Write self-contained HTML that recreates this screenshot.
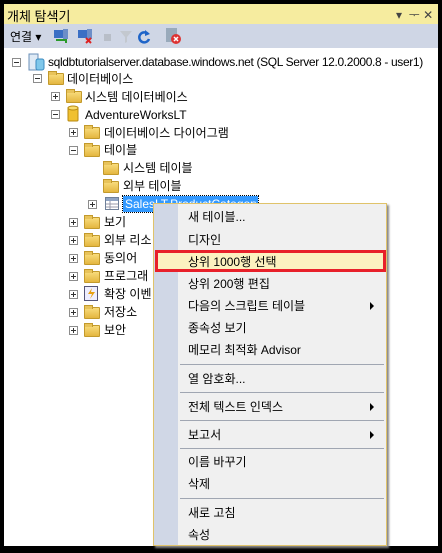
<!DOCTYPE html>
<html><head><meta charset="utf-8"><style>
*{margin:0;padding:0;box-sizing:border-box}
body{width:442px;height:553px;background:#000;position:relative;overflow:hidden;font-family:"Segoe UI","Liberation Sans","Noto Sans CJK KR",sans-serif;font-size:12px;color:#000}
.a{position:absolute;white-space:nowrap}
#title{left:4px;top:4px;width:434px;height:20px;background:#f6ec9f}
#tb{left:4px;top:24px;width:434px;height:24px;background:#cfd6e5}
#tree{left:4px;top:48px;width:434px;height:498px;background:#fff;overflow:hidden}
.ex{position:absolute;width:9px;height:9px;border:1px solid #8c8c8c;background:#fff}
.ex:before{content:"";position:absolute;left:1px;top:3px;width:5px;height:1px;background:#333}
.ex.p:after{content:"";position:absolute;left:3px;top:1px;width:1px;height:5px;background:#333}
.fd{position:absolute;width:16px;height:12px;background:linear-gradient(#f8dc7c,#e4b640);border:1px solid #c39a2c;border-radius:1px}
.fd:before{content:"";position:absolute;left:-1px;top:-3px;width:7px;height:3px;background:#e8c35a;border:1px solid #c39a2c;border-bottom:none}
.t{position:absolute;line-height:16px}
#menu{left:153px;top:203px;width:234px;height:343px;background:#f0f0f0;border:1px solid #e0c36a;box-shadow:2px 2px 2px #888}
#strip{position:absolute;left:0;top:0;width:24px;height:100%;background:#d0d7e6}
.mi{position:absolute;left:34px;line-height:16px}
.sep{position:absolute;left:26px;right:2px;height:1px;background:#a0a6b2}
.arr{position:absolute;left:216px;width:0;height:0;border-left:4px solid #000;border-top:4px solid transparent;border-bottom:4px solid transparent}
</style></head><body>
<div class="a" id="title"><span class="a" style="left:3px;top:2px;font-size:13px">개체 탐색기</span><span class="a" style="left:392px;top:2px;font-size:12px;color:#444">▾ &nbsp;ᅮ ✕</span></div>
<div class="a" id="tb">
<span class="a" style="left:6px;top:4px">연결 ▾</span>
<svg class="a" style="left:50px;top:4px" width="100" height="18">
<rect x="0" y="2" width="10" height="8" fill="#3a6fc4"/><rect x="9" y="1" width="5" height="10" fill="#6c8ec8"/><path d="M2 12h10v3" stroke="#2a9a2a" stroke-width="2" fill="none"/>
<rect x="24" y="2" width="10" height="8" fill="#3a6fc4"/><rect x="33" y="1" width="5" height="10" fill="#6c8ec8"/><path d="M32 10l5 5M37 10l-5 5" stroke="#d22" stroke-width="2"/>
<rect x="50" y="6" width="7" height="7" fill="#b8bec8"/>
<path d="M66 3h12l-5 6v5l-2 1v-6z" fill="#c3c8cf"/>
<path d="M94 6a5 5 0 1 0 1 5" stroke="#1e64c8" stroke-width="2.5" fill="none"/><path d="M91 2l5 4-5 2z" fill="#1e64c8"/>
</svg>
<svg class="a" style="left:160px;top:3px" width="18" height="18"><rect x="2" y="1" width="11" height="14" fill="#9ab" /><circle cx="12" cy="12" r="5" fill="#d33"/><path d="M10 10l4 4M14 10l-4 4" stroke="#fff" stroke-width="1.5"/></svg>
</div>
<div class="a" id="tree">
<div class="ex" style="left:8px;top:10px"></div>
<svg class="a" style="left:24px;top:5px" width="18" height="18"><rect x="1" y="1" width="9" height="16" fill="#dfeaf5" stroke="#6a8fb8"/><rect x="8" y="6" width="8" height="11" rx="2" fill="#7fc7ea" stroke="#3b8bc0"/></svg>
<span class="t" style="left:44px;top:6px;letter-spacing:-0.35px">sqldbtutorialserver.database.windows.net (SQL Server 12.0.2000.8 - user1)</span>
<div class="ex" style="left:29px;top:26px"></div><div class="fd" style="left:44px;top:25px"></div><span class="t" style="left:63px;top:23px">데이터베이스</span>
<div class="ex p" style="left:47px;top:44px"></div><div class="fd" style="left:62px;top:43px"></div><span class="t" style="left:81px;top:41px">시스템 데이터베이스</span>
<div class="ex" style="left:47px;top:62px"></div>
<svg class="a" style="left:63px;top:57px" width="12" height="17"><rect x="1" y="2" width="10" height="14" rx="1" fill="#f0c030" stroke="#b88a10"/><ellipse cx="6" cy="3" rx="5" ry="2" fill="#f8dc70" stroke="#b88a10"/></svg>
<span class="t" style="left:81px;top:59px">AdventureWorksLT</span>
<div class="ex p" style="left:65px;top:80px"></div><div class="fd" style="left:80px;top:79px"></div><span class="t" style="left:100px;top:77px">데이터베이스 다이어그램</span>
<div class="ex" style="left:65px;top:98px"></div><div class="fd" style="left:80px;top:97px"></div><span class="t" style="left:100px;top:94px">테이블</span>
<div class="fd" style="left:99px;top:115px"></div><span class="t" style="left:119px;top:112px">시스템 테이블</span>
<div class="fd" style="left:99px;top:133px"></div><span class="t" style="left:119px;top:130px">외부 테이블</span>
<div class="ex p" style="left:84px;top:152px"></div>
<svg class="a" style="left:101px;top:149px" width="14" height="13"><rect x="0.5" y="0.5" width="13" height="12" fill="#fff" stroke="#6e7f99"/><rect x="1" y="1" width="12" height="3" fill="#8fa3c3"/><path d="M1 7h12M1 10h12M5 4v8" stroke="#99a" /></svg>
<span class="t" style="left:119px;top:148px;background:#3399ff;color:#fff;padding:0 2px;outline:1px dotted #000;width:135px;overflow:hidden">SalesLT.ProductCategory</span>
<div class="ex p" style="left:65px;top:170px"></div><div class="fd" style="left:80px;top:169px"></div><span class="t" style="left:100px;top:166px">보기</span>
<div class="ex p" style="left:65px;top:188px"></div><div class="fd" style="left:80px;top:187px"></div><span class="t" style="left:100px;top:184px">외부 리소</span>
<div class="ex p" style="left:65px;top:206px"></div><div class="fd" style="left:80px;top:205px"></div><span class="t" style="left:100px;top:202px">동의어</span>
<div class="ex p" style="left:65px;top:224px"></div><div class="fd" style="left:80px;top:223px"></div><span class="t" style="left:100px;top:220px">프로그래</span>
<div class="ex p" style="left:65px;top:242px"></div>
<svg class="a" style="left:80px;top:236px" width="16" height="17"><rect x="0.5" y="2.5" width="13" height="14" fill="#eef" stroke="#557"/><path d="M8 4l-4 6h4l-2 5 5-7H7z" fill="#e8a010"/></svg>
<span class="t" style="left:100px;top:238px">확장 이벤</span>
<div class="ex p" style="left:65px;top:260px"></div><div class="fd" style="left:80px;top:259px"></div><span class="t" style="left:100px;top:256px">저장소</span>
<div class="ex p" style="left:65px;top:278px"></div><div class="fd" style="left:80px;top:277px"></div><span class="t" style="left:100px;top:274px">보안</span>
</div>
<div class="a" id="menu">
<div id="strip"></div>
<span class="mi" style="top:5px">새 테이블...</span>
<span class="mi" style="top:28px">디자인</span>
<div style="position:absolute;left:1px;top:46px;width:231px;height:22px;border:3px solid #e8202a;background:#fcf1c0"></div>
<span class="mi" style="top:50px">상위 1000행 선택</span>
<span class="mi" style="top:72px">상위 200행 편집</span>
<span class="mi" style="top:94px">다음의 스크립트 테이블</span><div class="arr" style="top:98px"></div>
<span class="mi" style="top:116px">종속성 보기</span>
<span class="mi" style="top:138px">메모리 최적화 Advisor</span>
<div class="sep" style="top:160px"></div>
<span class="mi" style="top:167px">열 암호화...</span>
<div class="sep" style="top:188px"></div>
<span class="mi" style="top:195px">전체 텍스트 인덱스</span><div class="arr" style="top:199px"></div>
<div class="sep" style="top:216px"></div>
<span class="mi" style="top:223px">보고서</span><div class="arr" style="top:227px"></div>
<div class="sep" style="top:244px"></div>
<span class="mi" style="top:250px">이름 바꾸기</span>
<span class="mi" style="top:272px">삭제</span>
<div class="sep" style="top:294px"></div>
<span class="mi" style="top:301px">새로 고침</span>
<span class="mi" style="top:323px">속성</span>
</div>
</body></html>
